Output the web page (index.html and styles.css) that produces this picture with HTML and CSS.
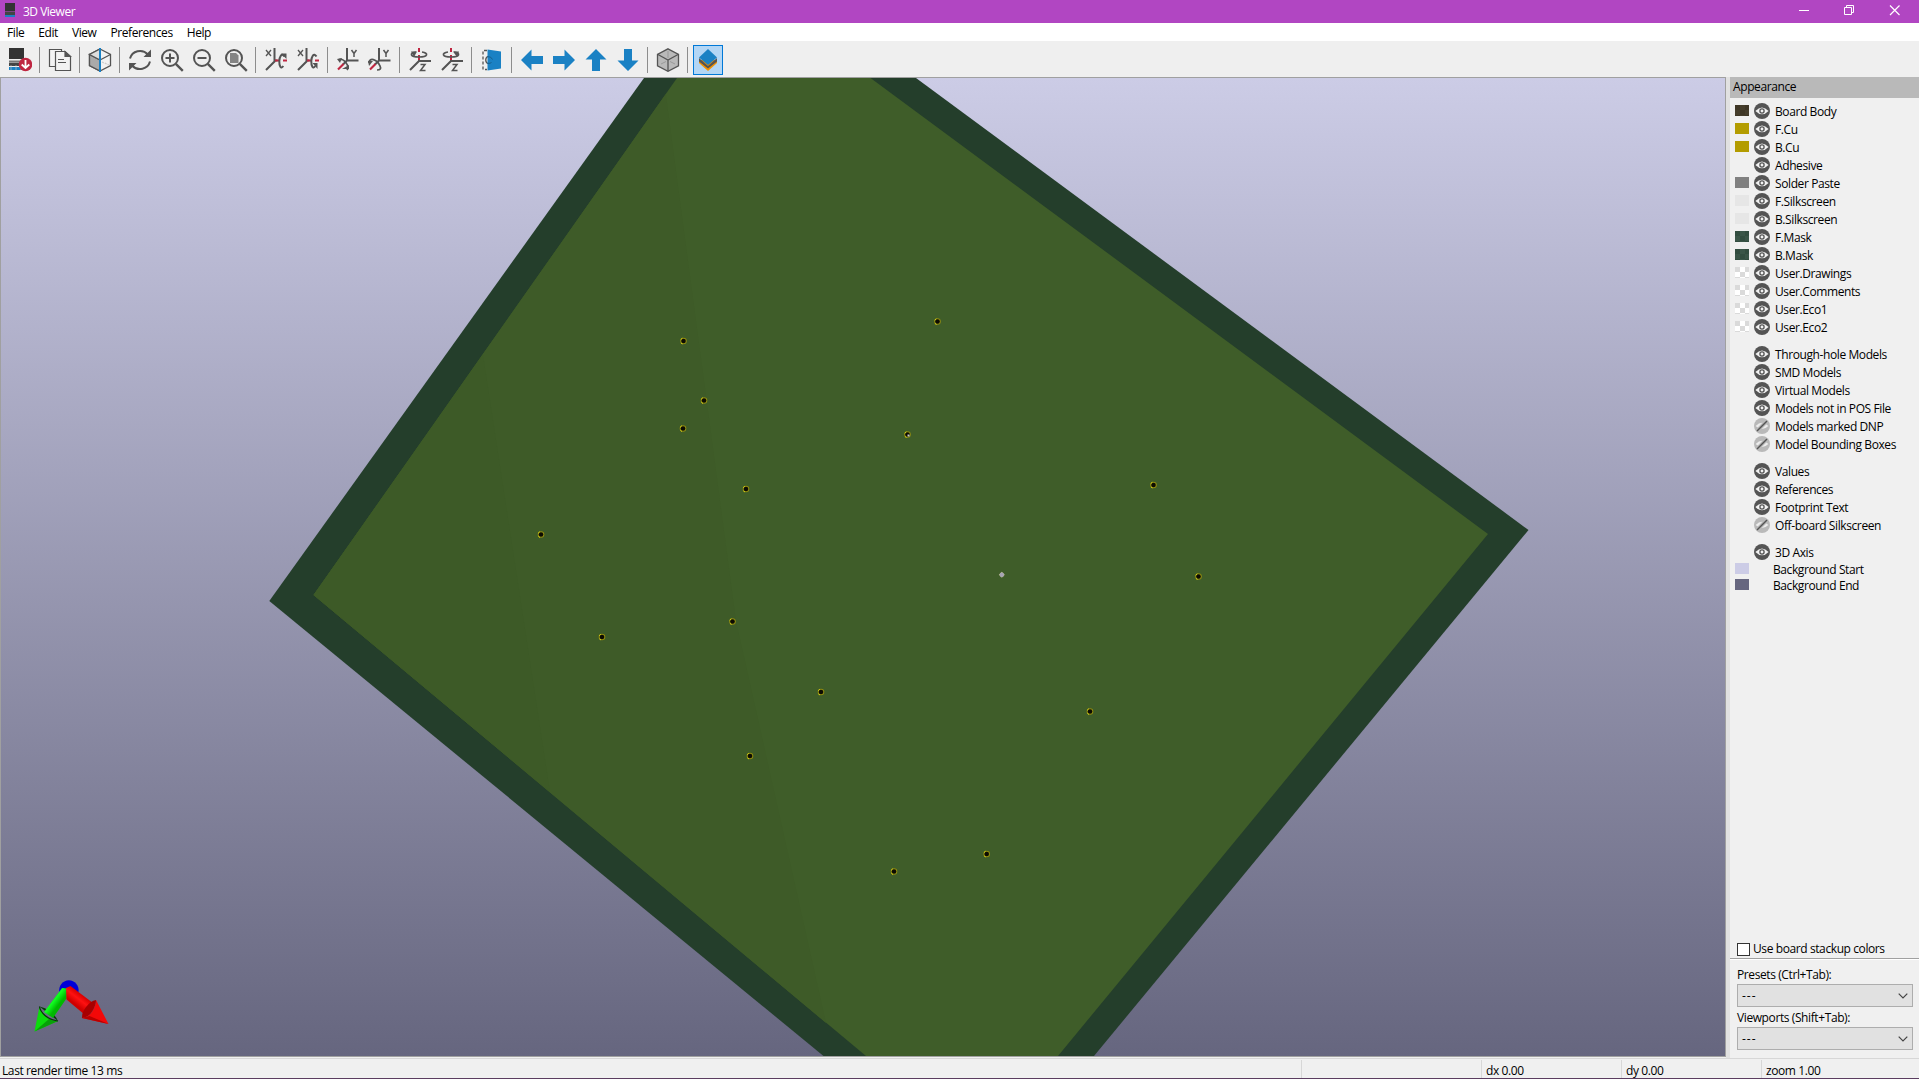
FILE: index.html
```html
<!DOCTYPE html>
<html lang="en">
<head>
<meta charset="utf-8">
<title>3D Viewer</title>
<link rel="stylesheet" href="styles.css">
</head>
<body>
<svg class="defs" width="0" height="0">
  <defs>
    <symbol id="eye" viewBox="0 0 16 16"><circle cx="8" cy="8" r="8" fill="#545454"/><path d="M1.400 8Q8 .9 14.600 8Q8 14.700 1.400 8Z" fill="#f2f2f2"/><circle cx="8" cy="8" r="2.1" fill="none" stroke="#545454" stroke-width="1.3"/></symbol>
    <symbol id="off" viewBox="0 0 16 16"><circle cx="8" cy="8" r="8" fill="#b9b9b9"/><path d="M1.6 8Q8 1.4 14.4 8Q8 14.2 1.6 8Z" fill="#ededed"/><path d="M3.2 12.8 12.8 3.2" stroke="#b9b9b9" stroke-width="4"/><path d="M3 13 13 3" stroke="#545454" stroke-width="1.5"/></symbol>
    <symbol id="chip" viewBox="0 0 24 24"><path d="M1 0h15v11H1z" fill="#333"/><path d="M1 12.5h15v1.5H1z" fill="#777"/><path d="M1 14.5h15V18H1z" fill="#444"/><path d="M1 19h15v3H1z" fill="#1a81c4"/></symbol>
    <symbol id="glass" viewBox="0 0 24 24"><circle cx="10" cy="10" r="8" fill="none" stroke="#545454" stroke-width="2"/><path d="m15.8 15.8 7 7" stroke="#545454" stroke-width="2.4"/></symbol>
    <symbol id="rotx" viewBox="0 0 24 24"><path d="M10.5 0v13.5L2 22M10.5 12.5h3" fill="none" stroke="#545454" stroke-width="2"/><path d="M11 12.5h4m4 0h4" stroke="#bf2641" stroke-width="2"/><path d="M20.5 8.5C17.5 4 15.5 9 15.3 13c-.1 5 1.500 8.500 4 5" fill="none" stroke="#545454" stroke-width="2"/></symbol>
    <symbol id="roty" viewBox="0 0 24 24"><path d="M11 0v12.500h11.500M11 12.500l-4 4" fill="none" stroke="#545454" stroke-width="2"/><path d="m7.500 16-5.500 5.500" stroke="#bf2641" stroke-width="2.200"/></symbol>
    <symbol id="rotz" viewBox="0 0 24 24"><path d="M11 8v5h12M11 13l-9 9" fill="none" stroke="#545454" stroke-width="2"/><path d="M11 0v4m0 3v5" stroke="#bf2641" stroke-width="2"/></symbol>
    <symbol id="arrow" viewBox="0 0 24 24"><path d="M1 12 11.500 1.500V8H23v8H11.500v6.500Z" fill="#1a81c4"/></symbol>
  </defs>
</svg>
<div class="window">
  <header class="titlebar">
    <svg class="app-icon" width="12" height="16" viewBox="0 0 12 16"><path d="M1 0h10v8H1z" fill="#333"/><path d="M1 8.500h10V12H1z" fill="#444"/><path d="M1 12h10v2H1z" fill="#1a81c4"/></svg>
    <span class="title">3D Viewer</span>
    <svg class="controls" width="102" height="11" viewBox="0 0 102 11" fill="none" stroke="#fff"><path d="M0 5.500h10M47.500 2.500v-2h7v7h-2M45.500 2.500h7v7h-7z"/><path d="m91 .5 9.500 9.500m0-9.500L91 10" stroke-width="1.200"/></svg>
  </header>
  <nav class="menu"><span>File</span><span>Edit</span><span>View</span><span>Preferences</span><span>Help</span></nav>
  <div class="toolbar">
    <div class="tool"><svg viewBox="0 0 24 24"><use href="#chip" width="24" height="24"/><path d="M3 17v5m5-5v5m5-5v5" stroke="#ccc" stroke-width=".6"/><circle cx="17.500" cy="16.500" r="6.800" fill="#bf2641"/><path d="M17.500 12v8m-3.800-3.500 3.800 3.500 3.800-3.500" fill="none" stroke="#fff" stroke-width="1.800"/></svg></div>
    <i class="sep"></i>
    <div class="tool"><svg viewBox="0 0 24 24" fill="#f2f2f2" stroke="#545454" stroke-width="1.200"><path d="M1.500 1.500h12v17h-12z"/><path d="M7.500 3.500H17l5.500 5v14h-15z"/><path d="M17 3.500v5h5.500z" fill="#545454"/><path d="M10 11.500h6m-6 3h8"/></svg></div>
    <i class="sep"></i>
    <div class="tool"><svg viewBox="0 0 24 24" stroke="#545454" stroke-width="1.300"><path d="m12 1 10.500 5.500v11L12 23 1.500 17.500v-11z" fill="#f2f2f2"/><path d="M1.500 6.500 12 12v11L1.500 17.500z" fill="#aaa"/><path d="M12 1v11L1.500 6.500z" fill="#ddd"/><path d="m12 12 10.500-5.500" fill="none"/><path d="m14 14 7 3" stroke="#ccc" stroke-dasharray="2 1"/><path d="M12 0v24" stroke="#1a81c4" stroke-width="2"/></svg></div>
    <i class="sep"></i>
    <div class="tool"><svg viewBox="0 0 24 24" fill="none" stroke="#545454" stroke-width="2"><path d="M2 10.500C4 3 14 0 20 6.500M22 13.500C20 21 10 24 4 17.500"/><path d="M23 1.500V9h-7.500zM1 22.500V15h7.500z" fill="#545454" stroke="none"/></svg></div>
    <div class="tool"><svg viewBox="0 0 24 24"><use href="#glass"/><path d="M5.500 10h9M10 5.500v9" stroke="#545454" stroke-width="2"/></svg></div>
    <div class="tool"><svg viewBox="0 0 24 24"><use href="#glass"/><path d="M5.500 10h9" stroke="#545454" stroke-width="2"/></svg></div>
    <div class="tool"><svg viewBox="0 0 24 24"><use href="#glass"/><path d="M6 5h6l2.500 2.500V15H6z" fill="#848484"/></svg></div>
    <i class="sep"></i>
    <div class="tool"><svg viewBox="0 0 24 24"><use href="#rotx"/><path d="M17 5.500h5.500V11z" fill="#545454"/><path d="m2 2 5 6m0-6L2 8" stroke="#545454" stroke-width="1.300"/></svg></div>
    <div class="tool"><svg viewBox="0 0 24 24"><use href="#rotx"/><path d="M16.500 15h5v6z" fill="#545454"/><path d="m2 2 5 6m0-6L2 8" stroke="#545454" stroke-width="1.300"/></svg></div>
    <i class="sep"></i>
    <div class="tool"><svg viewBox="0 0 24 24"><use href="#roty"/><path d="M3 11.500C8 10 14 18 11 22" fill="none" stroke="#545454" stroke-width="1.700"/><path d="M6 21h7v-4zM1 11l5-1-2 5z" fill="#545454"/><path d="m15.500 2 2.500 3.500L20.500 2M18 5.500V9" fill="none" stroke="#545454" stroke-width="1.500"/></svg></div>
    <div class="tool"><svg viewBox="0 0 24 24"><use href="#roty"/><path d="M1 15C1 9 9 11 12 18q2 4-3 4" fill="none" stroke="#545454" stroke-width="1.700"/><path d="M0 13h5l-4 5z" fill="#545454"/><path d="m15.500 2 2.500 3.500L20.500 2M18 5.500V9" fill="none" stroke="#545454" stroke-width="1.500"/></svg></div>
    <i class="sep"></i>
    <div class="tool"><svg viewBox="0 0 24 24"><use href="#rotz"/><path d="M8 4C1 5 2 9 11 9c9 0 10-4 3-5" fill="none" stroke="#545454" stroke-width="1.700"/><path d="M3 3.500h6L6 9z" fill="#545454"/><path d="M12.500 16.500H17L12.500 22.500h5" fill="none" stroke="#545454" stroke-width="1.500"/></svg></div>
    <div class="tool"><svg viewBox="0 0 24 24"><use href="#rotz"/><path d="M8 4C1 5 2 9 11 9c9 0 10-4 3-5" fill="none" stroke="#545454" stroke-width="1.700"/><path d="M13 3.500h6L17 9z" fill="#545454"/><path d="M12.500 16.500H17L12.500 22.500h5" fill="none" stroke="#545454" stroke-width="1.500"/></svg></div>
    <i class="sep"></i>
    <div class="tool"><svg viewBox="0 0 24 24"><path d="M7 2.500H3v19h4" fill="none" stroke="#545454" stroke-width="1.300" stroke-dasharray="3 2"/><path d="M11 8c-7 0-7 8 0 8" fill="none" stroke="#545454" stroke-width="1.400"/><path d="M7.500 1.500 21 3.500v17l-13.500 2z" fill="#1a81c4"/><path d="M7.500 8.500q4 0 5 3m-5 4q3 0 4-1" fill="none" stroke="#17608e"/></svg></div>
    <i class="sep"></i>
    <div class="tool"><svg viewBox="0 0 24 24"><use href="#arrow"/></svg></div>
    <div class="tool"><svg viewBox="0 0 24 24"><use href="#arrow" transform="rotate(180 12 12)"/></svg></div>
    <div class="tool"><svg viewBox="0 0 24 24"><use href="#arrow" transform="rotate(90 12 12)"/></svg></div>
    <div class="tool"><svg viewBox="0 0 24 24"><use href="#arrow" transform="rotate(270 12 12)"/></svg></div>
    <i class="sep"></i>
    <div class="tool"><svg viewBox="0 0 24 24" stroke="#545454" stroke-width="1.300"><path d="m12 .8 10.500 5.500v11.500L12 23.300 1.500 17.800V6.300z" fill="#b9b9b9"/><path d="M1.500 6.300 12 12l10.500-5.700M12 12v11.300" fill="none"/><path d="M12 3v7m-7 6 5-2.500m9 2.500-5-2.500" stroke="#999" stroke-width="1"/></svg></div>
    <i class="sep"></i>
    <div class="tool active"><svg viewBox="0 0 24 24"><path d="m3 15 9 8 9-8v-3H3z" fill="#f29100"/><path d="m3 10 9 8 9-8v3.500l-9 7-9-7z" fill="#545454"/><path d="m12 1 9 8.500-9 7.500-9-7.500z" fill="#1a81c4"/></svg></div>
  </div>
  <main class="work">
    <svg class="canvas" viewBox="1 78 1724 978" preserveAspectRatio="none">
      <defs>
        <linearGradient id="sky" x2="0" y2="1"><stop stop-color="#cccce6"/><stop offset="1" stop-color="#66667f"/></linearGradient>
        <linearGradient id="gs" gradientUnits="userSpaceOnUse" x1="51" y1="996" x2="60" y2="1003"><stop stop-color="#00c800"/><stop offset=".45" stop-color="#1f2"/><stop offset="1" stop-color="#00b800"/></linearGradient>
        <linearGradient id="rs" gradientUnits="userSpaceOnUse" x1="82" y1="995" x2="75" y2="1004"><stop stop-color="#d80000"/><stop offset=".45" stop-color="#f11"/><stop offset="1" stop-color="#d00000"/></linearGradient>
        <g id="hole"><circle r="3.300" fill="#8f8b10"/><circle r="2.300" fill="#0c0b02"/><path d="M-2.800-1.300-1.200-2.800M-2.500 2-1 3" stroke="#d5d01a"/></g>
      </defs>
      <path d="M1 78h1724v978H1z" fill="url(#sky)"/>
      <path d="M644 78h272l612.500 452L1094 1056H823.500L269.300 601z" fill="#243e2b"/>
      <path d="M677 78h193.500L1488 534l-430 522H866L313.500 595z" fill="#3f5d29"/>
      <path d="m665.800 94 70.200 527 90 402L313.500 595z" fill="#3e5b28"/>
      <path d="m483 355-169.500 240L550 792z" fill="#3d5a27"/>
      <use href="#hole" x="683.500" y="341"/><use href="#hole" x="704" y="400.500"/><use href="#hole" x="683" y="428.500"/>
      <use href="#hole" x="937.500" y="321.500"/><use href="#hole" x="907.500" y="434.500"/><use href="#hole" x="746" y="489"/>
      <use href="#hole" x="541" y="534.500"/><use href="#hole" x="1153.500" y="485"/><use href="#hole" x="1198.500" y="576.500"/>
      <use href="#hole" x="732.500" y="621.500"/><use href="#hole" x="602" y="637"/><use href="#hole" x="821" y="692"/>
      <use href="#hole" x="1090" y="711.500"/><use href="#hole" x="750" y="756"/><use href="#hole" x="986.700" y="854"/><use href="#hole" x="894" y="871.500"/>
      <path d="M907.500 434.500h2v2h-2z" fill="#c9c9d0"/>
      <path d="m1001.800 571.800 3 3-3 3-3-3z" fill="#c0bf8e"/><circle cx="1001.800" cy="574.800" r="2.200" fill="#a6a4b4"/>
      <path d="M59.300 992a9.700 10.200 0 1 1 19.200 0z" fill="#0000d8"/>
      <path d="m39.500 1006.500 18.500 14.500q-5-11-18.500-14.500z" fill="#063d06"/>
      <path d="m62 988 5 .5-.5 10L53 1018l-9-6z" fill="url(#gs)"/>
      <path d="M39.500 1006.500 34.500 1031.500 58 1021q-8 0-13-5.500t-5.500-9z" fill="#0cdc0c"/><path d="m34.500 1031.500 23.500-10.500q-6 0-9-2z" fill="#08a008"/>
      <path d="M39.500 1006.500q.5 4.500 5.500 9t13 5.500" fill="none" stroke="#053505" stroke-width="1.200"/>
      <path d="m66 988 4.500-2L93 1003l-8 12-18.500-15.500z" fill="url(#rs)"/>
      <path d="M96 1000 108.500 1024 82 1018q7-1 10.500-7t3.500-11z" fill="#f30808"/><path d="m82 1018 26.500 6-19-8z" fill="#b80000"/>
      <path d="M96 1000q-5.500 1-10 7t-4 11q7-1 10.500-7t3.500-11z" fill="#a80000"/>
    </svg>
    <aside class="panel">
      <h2>Appearance</h2>
      <ul class="layers">
        <li><i class="sw body"></i><svg><use href="#eye"/></svg><span>Board Body</span></li>
        <li><i class="sw copper"></i><svg><use href="#eye"/></svg><span>F.Cu</span></li>
        <li><i class="sw copper"></i><svg><use href="#eye"/></svg><span>B.Cu</span></li>
        <li><i class="sw"></i><svg><use href="#eye"/></svg><span>Adhesive</span></li>
        <li><i class="sw paste"></i><svg><use href="#eye"/></svg><span>Solder Paste</span></li>
        <li><i class="sw silk"></i><svg><use href="#eye"/></svg><span>F.Silkscreen</span></li>
        <li><i class="sw silk"></i><svg><use href="#eye"/></svg><span>B.Silkscreen</span></li>
        <li><i class="sw mask"></i><svg><use href="#eye"/></svg><span>F.Mask</span></li>
        <li><i class="sw mask"></i><svg><use href="#eye"/></svg><span>B.Mask</span></li>
        <li><i class="sw clear"></i><svg><use href="#eye"/></svg><span>User.Drawings</span></li>
        <li><i class="sw clear"></i><svg><use href="#eye"/></svg><span>User.Comments</span></li>
        <li><i class="sw clear"></i><svg><use href="#eye"/></svg><span>User.Eco1</span></li>
        <li><i class="sw clear"></i><svg><use href="#eye"/></svg><span>User.Eco2</span></li>
      </ul>
      <ul class="layers">
        <li><i class="sw"></i><svg><use href="#eye"/></svg><span>Through-hole Models</span></li>
        <li><i class="sw"></i><svg><use href="#eye"/></svg><span>SMD Models</span></li>
        <li><i class="sw"></i><svg><use href="#eye"/></svg><span>Virtual Models</span></li>
        <li><i class="sw"></i><svg><use href="#eye"/></svg><span>Models not in POS File</span></li>
        <li><i class="sw"></i><svg><use href="#off"/></svg><span>Models marked DNP</span></li>
        <li><i class="sw"></i><svg><use href="#off"/></svg><span>Model Bounding Boxes</span></li>
      </ul>
      <ul class="layers">
        <li><i class="sw"></i><svg><use href="#eye"/></svg><span>Values</span></li>
        <li><i class="sw"></i><svg><use href="#eye"/></svg><span>References</span></li>
        <li><i class="sw"></i><svg><use href="#eye"/></svg><span>Footprint Text</span></li>
        <li><i class="sw"></i><svg><use href="#off"/></svg><span>Off-board Silkscreen</span></li>
      </ul>
      <ul class="layers">
        <li><i class="sw"></i><svg><use href="#eye"/></svg><span>3D Axis</span></li>
        <li class="plain"><i class="sw start"></i><span>Background Start</span></li>
        <li class="plain"><i class="sw end"></i><span>Background End</span></li>
      </ul>
      <div class="stackup"><i class="check"></i>Use board stackup colors</div>
      <div class="presets">
        <label>Presets (Ctrl+Tab):</label>
        <div class="select">---<svg width="10" height="6" viewBox="0 0 10 6"><path d="m.7.7 4.300 4.300L9.300.7" fill="none" stroke="#444" stroke-width="1.200"/></svg></div>
        <label>Viewports (Shift+Tab):</label>
        <div class="select">---<svg width="10" height="6" viewBox="0 0 10 6"><path d="m.7.7 4.300 4.300L9.300.7" fill="none" stroke="#444" stroke-width="1.200"/></svg></div>
      </div>
    </aside>
  </main>
  <footer class="status"><span>Last render time 13 ms</span><span></span><span>dx 0.00</span><span>dy 0.00</span><span>zoom 1.00</span></footer>
</div>
</body>
</html>
```
FILE: styles.css
```css
* { box-sizing: border-box; }
body { margin: 0; font: 12px/18px "Open Sans", "Noto Sans", sans-serif; color: #000; }
.defs { display: block; height: 0; }
.window { display: flex; flex-direction: column; width: 1919px; height: 1079px; background: #f0f0f0; overflow: hidden; border-bottom: 1px solid #5b3d60; }
.titlebar { display: flex; align-items: flex-start; height: 23px; flex: none; background: #b146c2; color: #fff; padding: 3px 18px 0 4px; }
.title { margin-left: 7px; letter-spacing: -.5px; }
.controls { margin: 2px 0 0 auto; }
.menu { display: flex; flex: none; gap: 14px; height: 18px; padding-left: 7px; background: #fff; line-height: 20px; letter-spacing: -.42px; }
.toolbar { display: flex; flex: none; height: 36px; padding: 4px 0 0 5px; background: #efefef; }
.tool { width: 30px; height: 30px; padding: 3px; margin-right: 2px; flex: none; }
.tool svg { display: block; width: 24px; height: 24px; }
.active { padding: 2px; border: 1px solid #0078d7; background: #b3d6f5; }
.sep { width: 1px; height: 26px; margin: 2px 5px 0 2px; background: #8d8d8d; }
.work { display: flex; flex: none; height: 981px; }
.canvas { display: block; width: 1726px; height: 980px; border: 1px solid #a0a0a0; flex: none; }
.panel { display: flex; flex-direction: column; flex: 1; border-left: 4px solid #e1e1e1; background: #f0f0f0; letter-spacing: -.4px; }
.panel h2 { margin: 0 0 4px; height: 21px; padding-left: 3px; font-size: 12px; line-height: 20px; font-weight: 400; background: #b9b9b9; }
.layers { list-style: none; margin: 0 0 9px; padding: 0 0 0 5px; }
.layers li { display: flex; align-items: center; height: 18px; }
.layers span { padding-top: 1px; }
.layers svg { width: 16px; height: 16px; margin: 0 5px; flex: none; }
.layers .plain { height: 16px; gap: 24px; }
.sw { width: 14px; height: 11px; margin-bottom: 1px; flex: none; }
.body { background: repeating-conic-gradient(#453d2c 0 25%, #3e3626 0 50%) 0 0 / 10px 10px; }
.copper { background: #b39c00; }
.paste { background: #808080; }
.silk { background: #e6e6e6; }
.mask { background: repeating-conic-gradient(#3a5548 0 25%, #324d40 0 50%) 0 0 / 10px 10px; }
.clear { background: repeating-conic-gradient(#fff 0 25%, #dadada 0 50%) 0 0 / 10px 10px; }
.start { background: #cccce6; }
.end { background: #66667f; }
.stackup { display: flex; align-items: center; gap: 3px; height: 18px; margin-top: auto; padding-left: 7px; }
.check { width: 13px; height: 13px; border: 1px solid #333; background: #fff; }
.presets { border-top: 1px solid #a0a0a0; box-shadow: inset 0 1px #fff; height: 100px; padding: 7px 6px 0 7px; }
.presets label { display: block; height: 18px; }
.select { display: flex; justify-content: space-between; align-items: center; height: 23px; margin-bottom: 2px; padding: 0 4px; border: 1px solid #adadad; background: #e1e1e1; letter-spacing: 1px; }
.status { display: flex; flex: 1; border-top: 1px solid #d7d7d7; }
.status span { width: 140px; padding-left: 4px; margin-top: 1px; border-left: 1px solid #d7d7d7; line-height: 21px; letter-spacing: -.4px; }
.status span:first-child { width: 1301px; padding-left: 2px; border: 0; }
.status span:nth-child(2) { width: 180px; }
.status span:last-child { flex: 1; }
```
